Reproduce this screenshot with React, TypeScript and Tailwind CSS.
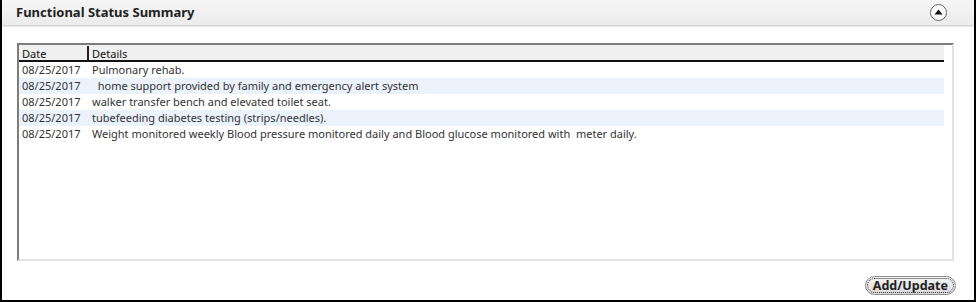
import React from 'react';

const rows = [
  { date: '08/25/2017', details: 'Pulmonary rehab.' },
  { date: '08/25/2017', details: '\u00a0\u00a0home support provided by family and emergency alert system' },
  { date: '08/25/2017', details: 'walker transfer bench and elevated toilet seat.' },
  { date: '08/25/2017', details: 'tubefeeding diabetes testing (strips/needles).' },
  { date: '08/25/2017', details: 'Weight monitored weekly Blood pressure monitored daily and Blood glucose monitored with \u00a0meter daily.' },
];

function CollapseIcon() {
  return (
    <svg width="19" height="19" viewBox="0 0 19 19">
      <circle cx="9.5" cy="9.5" r="8" fill="#fafafa" stroke="#666" strokeWidth="1" />
      <path d="M5.5 11.5 L9.5 6.5 L13.5 11.5 Z" fill="#111" />
    </svg>
  );
}

export default function App() {
  return (
    <div className="w-[976px] h-[302px] bg-white border-x-2 border-b-2 border-black flex flex-col font-['Noto_Sans',sans-serif] text-[11px] text-[#333]">
      {/* header */}
      <div className="h-[25px] shrink-0 flex items-center justify-between pl-[14px] pr-[26px] bg-gradient-to-b from-[#f6f6f6] to-[#ebebeb] shadow-[0_1px_2px_rgba(0,0,0,0.25)]">
        <span className="text-[13px] font-bold text-[#222]">Functional Status Summary</span>
        <CollapseIcon />
      </div>

      <div className="flex-1 flex flex-col pl-[15px] pr-[20px] pt-[18px]">
        {/* grid box */}
        <div className="h-[218px] border-t-2 border-l-2 border-t-[#7d7d7d] border-l-[#7d7d7d] border-r-2 border-b-2 border-r-[#e2e2e2] border-b-[#e2e2e2] pr-[8px]">
          <div className="flex h-[17px] bg-[#f0f0f0] border-b-2 border-[#111] text-[#111]">
            <div className="w-[70px] pl-[3px] leading-[16px] border-r-2 border-[#222] mt-[1px]">Date</div>
            <div className="pl-[3px] leading-[16px] mt-[1px]">Details</div>
          </div>
          {rows.map((r, i) => (
            <div key={i} className={`flex h-[16px] leading-[16px] whitespace-pre ${i % 2 === 1 ? 'bg-[#ecf2fb]' : 'bg-white'}`}>
              <div className="w-[71px] pl-[3px]">{r.date}</div>
              <div className="pl-[2px]">{r.details}</div>
            </div>
          ))}
        </div>

        <div className="flex justify-end mt-[15px]">
          <button className="h-[19px] px-[7px] -mr-[2px] rounded-full border border-[#8c8c8c] bg-gradient-to-b from-[#f4f4f4] to-[#d9d9d9] text-[12.5px] font-bold text-[#222] leading-[15px] outline-1 outline-dotted outline-[#333] -outline-offset-[3px]">
            Add/Update
          </button>
        </div>
      </div>
    </div>
  );
}
